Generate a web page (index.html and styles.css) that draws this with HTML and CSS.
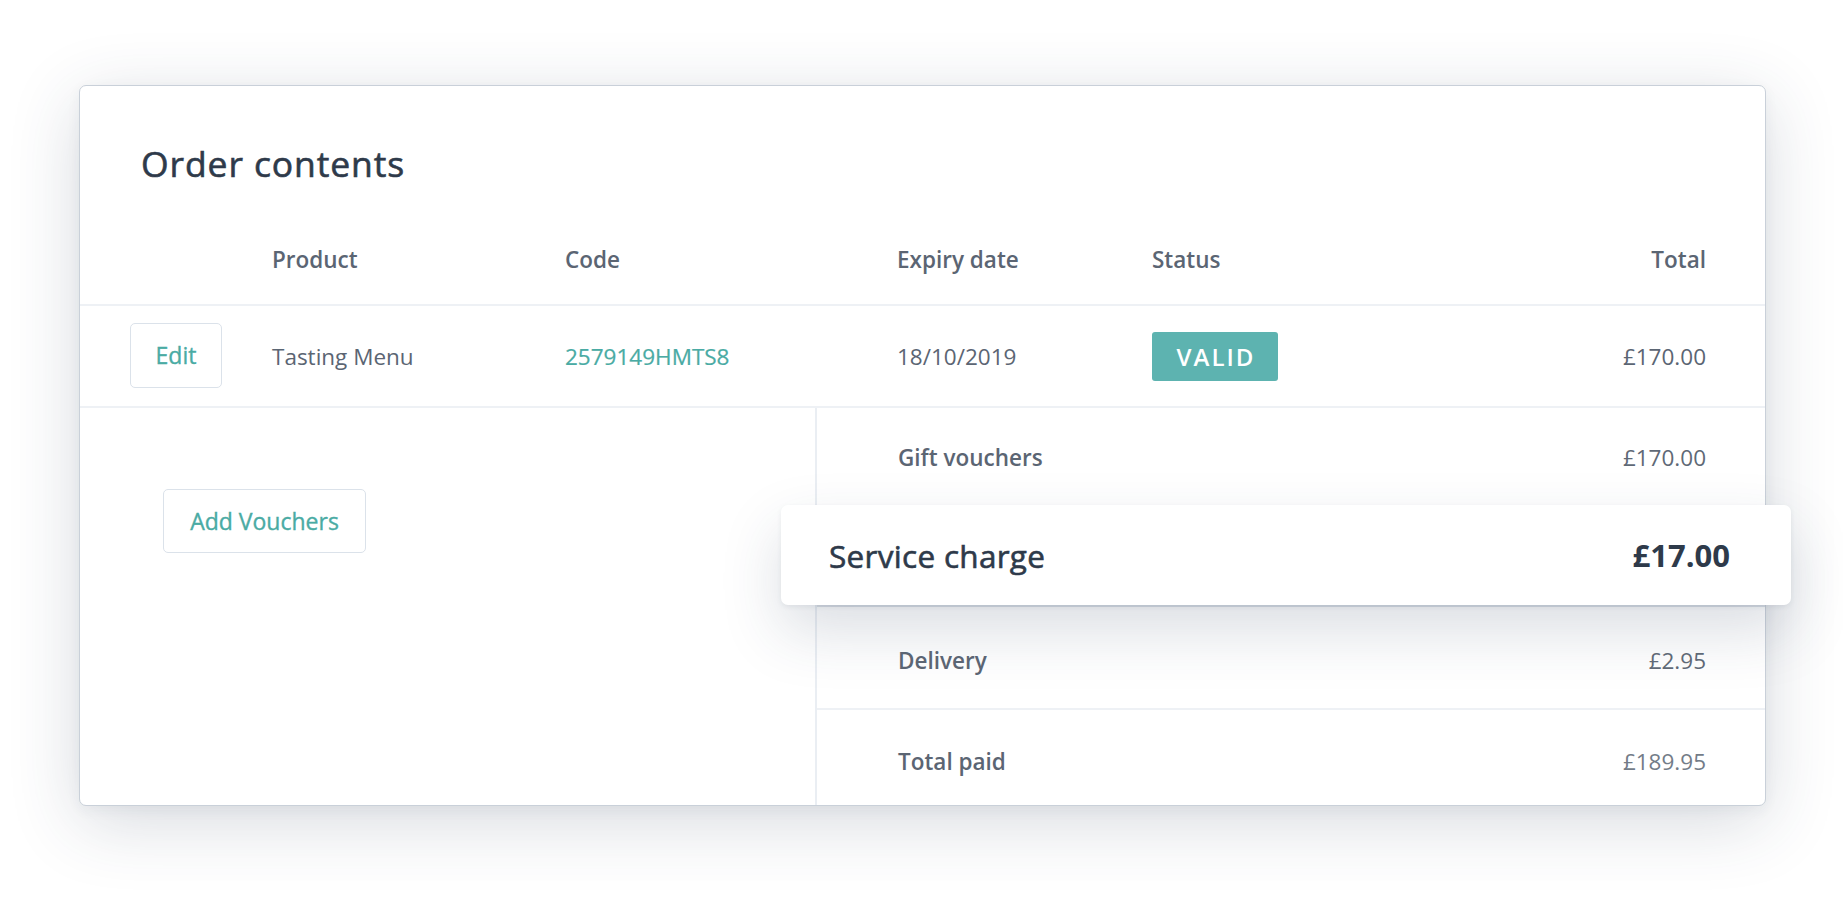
FILE: index.html
```html
<!DOCTYPE html>
<html lang="en">
<head>
<meta charset="utf-8">
<title>Order contents</title>
<link rel="stylesheet" href="styles.css">
</head>
<body>
<div class="page">
  <section class="card">
    <h1 class="title">Order contents</h1>

    <div class="row head">
      <div></div>
      <div>Product</div>
      <div>Code</div>
      <div>Expiry date</div>
      <div>Status</div>
      <div class="right">Total</div>
    </div>

    <div class="row item">
      <div><button class="btn btn-edit">Edit</button></div>
      <div>Tasting Menu</div>
      <div class="code">2579149HMTS8</div>
      <div>18/10/2019</div>
      <div><span class="badge">VALID</span></div>
      <div class="right">£170.00</div>
    </div>

    <div class="lower">
      <div class="actions">
        <button class="btn btn-add">Add Vouchers</button>
      </div>
      <div class="summary">
        <div class="sum-row r-gift"><span class="label">Gift vouchers</span><span class="value">£170.00</span></div>
        <div class="sum-row r-service">
          <div class="highlight"><span class="hl-label">Service charge</span><span class="hl-value">£17.00</span></div>
        </div>
        <div class="sum-row r-delivery"><span class="label">Delivery</span><span class="value">£2.95</span></div>
        <div class="sum-row r-total"><span class="label">Total paid</span><span class="value muted">£189.95</span></div>
      </div>
    </div>
  </section>
</div>
</body>
</html>
```

FILE: styles.css
```css
* { box-sizing: border-box; }

html, body {
  margin: 0;
  padding: 0;
  background: #ffffff;
}

body {
  font-family: "Open Sans", "Noto Sans", sans-serif;
  color: #5b6573;
  width: 1843px;
  height: 909px;
  overflow: hidden;
}

.page {
  padding: 85px 0 0 79px;
}

.card {
  position: relative;
  width: 1687px;
  height: 721px;
  background: #ffffff;
  border: 1px solid #c9d0d9;
  border-radius: 7px;
  box-shadow: 0 16px 70px rgba(42, 58, 86, 0.19), 0 4px 14px rgba(42, 58, 86, 0.05);
}

.title {
  margin: 0;
  padding: 53px 0 0 61px;
  height: 101px;
  font-size: 35.5px;
  line-height: 48px;
  font-weight: 400;
  letter-spacing: 0.9px;
  -webkit-text-stroke: 0.6px #2e3a4a;
  color: #2e3a4a;
}

.row {
  display: grid;
  grid-template-columns: 142px 293px 332px 255px 1fr auto;
  align-items: center;
  padding: 0 59px 0 50px;
  font-size: 22.5px;
  border-bottom: 2px solid #eef1f5;
}

.row .right { text-align: right; }

.head {
  margin-top: 27px;
  height: 92px;
  font-weight: 600;
  color: #5b6573;
}

.item {
  height: 102px;
  color: #5b6573;
  padding-top: 1px;
}

.code {
  color: #4aaba4;
  -webkit-text-stroke: 0.2px #4aaba4;
}

.btn {
  font-family: "Open Sans", "Noto Sans", sans-serif;
  background: #ffffff;
  color: #4aaba4;
  border: 1.5px solid #dbe2ea;
  border-radius: 5px;
  font-weight: 400;
  -webkit-text-stroke: 0.35px #4aaba4;
  font-size: 23px;
  cursor: pointer;
  padding: 0;
}

.btn-edit {
  width: 92px;
  height: 65px;
  margin-top: -3px;
}

.badge {
  display: inline-flex;
  align-items: center;
  justify-content: center;
  width: 126px;
  height: 49px;
  background: #5db3b0;
  color: #ffffff;
  border-radius: 3px;
  font-size: 24px;
  font-weight: 600;
  letter-spacing: 2px;
  padding-left: 2px;
}

.lower {
  display: grid;
  grid-template-columns: 735px 1fr;
  height: 397px;
}

.actions {
  padding: 81px 0 0 83px;
}

.btn-add {
  width: 203px;
  height: 64px;
}

.summary {
  border-left: 2px solid #eaeef3;
  display: flex;
  flex-direction: column;
}

.sum-row {
  position: relative;
  display: flex;
  justify-content: space-between;
  align-items: center;
  padding: 0 59px 0 81px;
  font-size: 22.5px;
  border-bottom: 2px solid #eef1f5;
}

.sum-row .label {
  font-weight: 600;
  color: #5b6573;
}

.sum-row .value {
  color: #5f6976;
}

.sum-row .value.muted {
  color: #737c88;
}

.r-gift { height: 99px; padding-top: 2px; }
.r-service { height: 100px; border-bottom-color: #dfe3e8; }
.r-delivery { height: 103px; padding-top: 6px; }
.r-total { height: 95px; padding-top: 8px; border-bottom: none; }

.highlight {
  position: absolute;
  left: -36px;
  right: -26px;
  top: -2px;
  height: 100px;
  display: flex;
  justify-content: space-between;
  align-items: center;
  padding: 0 61px 0 48px;
  background: #ffffff;
  border-radius: 7px;
  box-shadow: 0 26px 60px rgba(42, 58, 86, 0.17), 0 2px 5px rgba(42, 58, 86, 0.08);
}

.hl-label {
  font-size: 31.5px;
  font-weight: 400;
  letter-spacing: 0.3px;
  -webkit-text-stroke: 0.6px #2e3a4a;
  color: #2e3a4a;
}

.hl-value {
  font-size: 31px;
  font-weight: 700;
  color: #2e3a4a;
}
```
